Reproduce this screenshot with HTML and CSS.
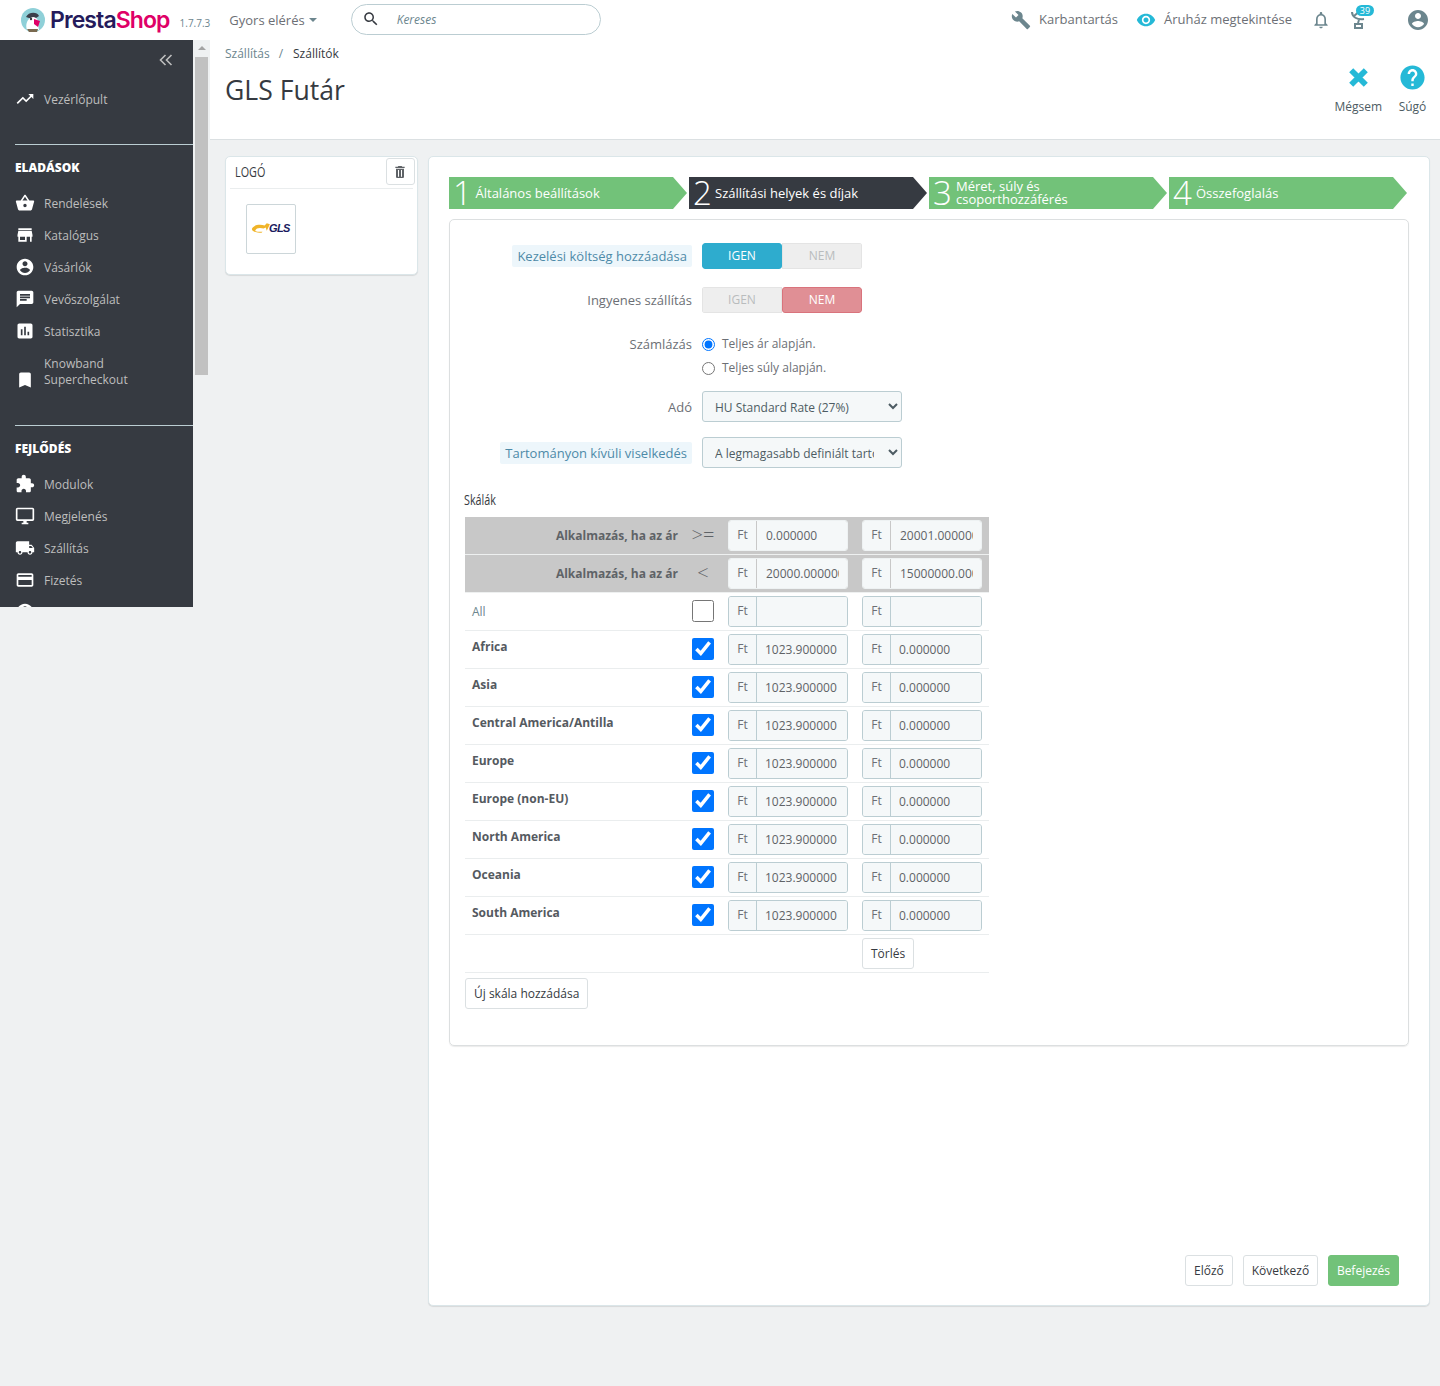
FILE: index.html
```html
<!DOCTYPE html>
<html lang="hu">
<head>
<meta charset="utf-8">
<title>GLS Futár</title>
<link rel="stylesheet" href="styles.css">
</head>
<body>
<svg class="sprite" aria-hidden="true">
<symbol id="i-trend" viewBox="0 0 24 24"><path d="M16 6l2.29 2.29-4.88 4.88-4-4L2 16.59 3.41 18l6-6 4 4 6.3-6.29L22 12V6z"/></symbol>
<symbol id="i-basket" viewBox="0 0 24 24"><path d="M17.21 9l-4.38-6.56c-.19-.28-.51-.42-.83-.42-.32 0-.64.14-.83.43L6.79 9H2c-.55 0-1 .45-1 1 0 .09.01.18.04.27l2.54 9.27c.23.84 1 1.46 1.92 1.46h13c.92 0 1.69-.62 1.93-1.46l2.54-9.27L23 10c0-.55-.45-1-1-1h-4.79zM9 9l3-4.4L15 9H9zm3 8c-1.1 0-2-.9-2-2s.9-2 2-2 2 .9 2 2-.9 2-2 2z"/></symbol>
<symbol id="i-store" viewBox="0 0 24 24"><path d="M20 4H4v2h16V4zm1 10v-2l-1-5H4l-1 5v2h1v6h10v-6h4v6h2v-6h1zm-9 4H6v-4h6v4z"/></symbol>
<symbol id="i-account" viewBox="0 0 24 24"><path d="M12 2C6.48 2 2 6.48 2 12s4.48 10 10 10 10-4.48 10-10S17.52 2 12 2zm0 3c1.66 0 3 1.34 3 3s-1.34 3-3 3-3-1.34-3-3 1.34-3 3-3zm0 14.2c-2.5 0-4.71-1.28-6-3.22.03-1.99 4-3.08 6-3.08 1.99 0 5.97 1.09 6 3.08-1.29 1.94-3.5 3.22-6 3.22z"/></symbol>
<symbol id="i-chat" viewBox="0 0 24 24"><path d="M20 2H4c-1.1 0-1.99.9-1.99 2L2 22l4-4h14c1.1 0 2-.9 2-2V4c0-1.1-.9-2-2-2zM6 9h12v2H6V9zm8 5H6v-2h8v2zm4-6H6V6h12v2z"/></symbol>
<symbol id="i-stats" viewBox="0 0 24 24"><path d="M19 3H5c-1.1 0-2 .9-2 2v14c0 1.1.9 2 2 2h14c1.1 0 2-.9 2-2V5c0-1.1-.9-2-2-2zM9 17H7v-7h2v7zm4 0h-2V7h2v10zm4 0h-2v-4h2v4z"/></symbol>
<symbol id="i-bookmark" viewBox="0 0 24 24"><path d="M17 3H7c-1.1 0-1.99.9-1.99 2L5 21l7-3 7 3V5c0-1.1-.9-2-2-2z"/></symbol>
<symbol id="i-puzzle" viewBox="0 0 24 24"><path d="M20.5 11H19V7c0-1.1-.9-2-2-2h-4V3.5C13 2.12 11.88 1 10.5 1S8 2.12 8 3.5V5H4c-1.1 0-1.99.9-1.99 2v3.8H3.5c1.49 0 2.7 1.21 2.7 2.7s-1.21 2.7-2.7 2.7H2V20c0 1.1.9 2 2 2h3.8v-1.5c0-1.49 1.21-2.7 2.7-2.7 1.49 0 2.7 1.21 2.7 2.7V22H17c1.1 0 2-.9 2-2v-4h1.5c1.38 0 2.5-1.12 2.5-2.5S21.88 11 20.5 11z"/></symbol>
<symbol id="i-desktop" viewBox="0 0 24 24"><path d="M21 2H3c-1.1 0-2 .9-2 2v12c0 1.1.9 2 2 2h7v2H8v2h8v-2h-2v-2h7c1.1 0 2-.9 2-2V4c0-1.1-.9-2-2-2zm0 14H3V4h18v12z"/></symbol>
<symbol id="i-truck" viewBox="0 0 24 24"><path d="M20 8h-3V4H3c-1.1 0-2 .9-2 2v11h2c0 1.66 1.34 3 3 3s3-1.34 3-3h6c0 1.66 1.34 3 3 3s3-1.34 3-3h2v-5l-3-4zM6 18.5c-.83 0-1.5-.67-1.5-1.5s.67-1.5 1.5-1.5 1.5.67 1.5 1.5-.67 1.5-1.5 1.5zm13.5-9l1.96 2.5H17V9.5h2.5zm-1.5 9c-.83 0-1.5-.67-1.5-1.5s.67-1.5 1.5-1.5 1.5.67 1.5 1.5-.67 1.5-1.5 1.5z"/></symbol>
<symbol id="i-card" viewBox="0 0 24 24"><path d="M20 4H4c-1.11 0-1.99.89-1.99 2L2 18c0 1.11.89 2 2 2h16c1.11 0 2-.89 2-2V6c0-1.11-.89-2-2-2zm0 14H4v-6h16v6zm0-10H4V6h16v2z"/></symbol>
<symbol id="i-wrench" viewBox="0 0 24 24"><path d="M22.7 19l-9.1-9.1c.9-2.3.4-5-1.5-6.9-2-2-5-2.4-7.4-1.3L9 6 6 9 1.6 4.7C.4 7.1.9 10.1 2.9 12.1c1.9 1.9 4.6 2.4 6.9 1.5l9.1 9.1c.4.4 1 .4 1.4 0l2.3-2.3c.5-.4.5-1.1.1-1.4z"/></symbol>
<symbol id="i-eye" viewBox="0 0 24 24"><path d="M12 4.5C7 4.5 2.73 7.61 1 12c1.73 4.39 6 7.5 11 7.5s9.27-3.11 11-7.5c-1.73-4.39-6-7.5-11-7.5zM12 17c-2.76 0-5-2.24-5-5s2.24-5 5-5 5 2.24 5 5-2.24 5-5 5zm0-8c-1.66 0-3 1.34-3 3s1.34 3 3 3 3-1.34 3-3-1.34-3-3-3z"/></symbol>
<symbol id="i-bell" viewBox="0 0 24 24"><path d="M12 22c1.1 0 2-.9 2-2h-4c0 1.1.9 2 2 2zm6-6v-5c0-3.07-1.63-5.64-4.5-6.32V4c0-.83-.67-1.5-1.5-1.5s-1.5.67-1.5 1.5v.68C7.64 5.36 6 7.92 6 11v5l-2 2v1h16v-1l-2-2zm-2 1H8v-6c0-2.48 1.51-4.5 4-4.5s4 2.02 4 4.5v6z"/></symbol>
<symbol id="i-help" viewBox="0 0 24 24"><path d="M12 2C6.48 2 2 6.48 2 12s4.48 10 10 10 10-4.48 10-10S17.52 2 12 2zm1 17h-2v-2h2v2zm2.07-7.75l-.9.92C13.45 12.9 13 13.5 13 15h-2v-.5c0-1.1.45-2.1 1.17-2.83l1.24-1.26c.37-.36.59-.86.59-1.41 0-1.1-.9-2-2-2s-2 .9-2 2H8c0-2.21 1.79-4 4-4s4 1.79 4 4c0 .88-.36 1.68-.93 2.25z"/></symbol>
<symbol id="i-trash" viewBox="0 0 24 24"><path fill-rule="evenodd" d="M6 19c0 1.1.9 2 2 2h8c1.1 0 2-.9 2-2V7H6v12zM9 9h1.500v10H9V9zm4.500 0H15v10h-1.500V9zM19 4h-3.500l-1-1h-5l-1 1H5v2h14V4z"/></symbol>
<symbol id="i-search" viewBox="0 0 24 24"><path d="M15.5 14h-.79l-.28-.27C15.41 12.59 16 11.11 16 9.5 16 5.91 13.09 3 9.5 3S3 5.91 3 9.5 5.91 16 9.5 16c1.61 0 3.09-.59 4.23-1.57l.27.28v.79l5 4.99L20.49 19l-4.99-5zm-6 0C7.01 14 5 11.99 5 9.5S7.01 5 9.5 5 14 7.01 14 9.5 11.99 14 9.500 14z"/></symbol>
</svg>

<header class="topbar">
  <svg class="logo-mark" viewBox="0 0 24 24" aria-hidden="true">
    <circle cx="12" cy="12" r="12" fill="#8fd0d8"/>
    <path d="M5 9c2-5 11-6 13-1l-3 2H8z" fill="#3b3f4a"/>
    <path d="M6 22c-2-5 0-12 6-13 4 0 6 4 5 8l1 5z" fill="#fff"/>
    <path d="M13 11l6 2-2 6-4-3z" fill="#df0067"/>
    <circle cx="10" cy="11" r="1.200" fill="#363a41"/>
    <path d="M6 21h11l-1 3H8z" fill="#7a6a50"/>
  </svg>
  <span class="logo-text"><span class="logo-presta">Presta</span><span class="logo-shop">Shop</span></span>
  <span class="version">1.7.7.3</span>
  <span class="quick">Gyors elérés<span class="caret"></span></span>
  <div class="search">
    <svg class="search-icon"><use href="#i-search"/></svg>
    <span class="search-text">Kereses</span>
  </div>
  <div class="top-right">
    <span class="top-link top-link-maint"><svg class="ic-wrench"><use href="#i-wrench"/></svg><span class="top-link-text">Karbantartás</span></span>
    <span class="top-link top-link-view"><svg class="ic-eye"><use href="#i-eye"/></svg><span class="top-link-text">Áruház megtekintése</span></span>
    <svg class="ic-bell"><use href="#i-bell"/></svg>
    <span class="cart">
      <svg class="ic-cart" viewBox="0 0 18 20"><path d="M1 3c0 5 5 8 12 7M8 11l-1 3M4 15h7v4H4zM3 7l7-6" fill="none" stroke="#6c868e" stroke-width="2"/></svg>
      <span class="badge">39</span>
    </span>
    <svg class="ic-profile"><use href="#i-account"/></svg>
  </div>
</header>

<div class="shell">
  <nav class="sidebar">
    <div class="collapse"><svg viewBox="0 0 14 12"><path d="M6.500 1L1.500 6l5 5M12.500 1l-5 5 5 5" fill="none" stroke="#bebebe" stroke-width="1.600"/></svg></div>
    <a class="nav-item nav-dash"><svg class="nav-ic"><use href="#i-trend"/></svg><span>Vezérlőpult</span></a>
    <section class="nav-section">
      <h2 class="nav-head">ELADÁSOK</h2>
      <a class="nav-item"><svg class="nav-ic"><use href="#i-basket"/></svg><span>Rendelések</span></a>
      <a class="nav-item"><svg class="nav-ic"><use href="#i-store"/></svg><span>Katalógus</span></a>
      <a class="nav-item"><svg class="nav-ic"><use href="#i-account"/></svg><span>Vásárlók</span></a>
      <a class="nav-item"><svg class="nav-ic"><use href="#i-chat"/></svg><span>Vevőszolgálat</span></a>
      <a class="nav-item"><svg class="nav-ic"><use href="#i-stats"/></svg><span>Statisztika</span></a>
      <a class="nav-item nav-item-tall"><svg class="nav-ic"><use href="#i-bookmark"/></svg><span>Knowband Supercheckout</span></a>
    </section>
    <section class="nav-section">
      <h2 class="nav-head">FEJLŐDÉS</h2>
      <a class="nav-item"><svg class="nav-ic"><use href="#i-puzzle"/></svg><span>Modulok</span></a>
      <a class="nav-item"><svg class="nav-ic"><use href="#i-desktop"/></svg><span>Megjelenés</span></a>
      <a class="nav-item"><svg class="nav-ic"><use href="#i-truck"/></svg><span>Szállítás</span></a>
      <a class="nav-item"><svg class="nav-ic"><use href="#i-card"/></svg><span>Fizetés</span></a>
      <a class="nav-item"><svg class="nav-ic"><use href="#i-account"/></svg><span></span></a>
    </section>
  </nav>

  <div class="scrollbar">
    <span class="scroll-arrow"></span>
    <span class="scroll-thumb"></span>
  </div>

  <main class="content">
    <div class="page-head">
      <div>
        <div class="crumbs"><span class="crumb-link">Szállítás</span><span class="crumb-sep">/</span><span class="crumb-cur">Szállítók</span></div>
        <h1 class="title">GLS Futár</h1>
      </div>
      <div class="head-actions">
        <div class="head-action">
          <svg class="ic-close" viewBox="0 0 24 24"><path d="M5 5l14 14M19 5L5 19" fill="none" stroke="#25b9d7" stroke-width="5.500"/></svg>
          <span>Mégsem</span>
        </div>
        <div class="head-action">
          <svg class="ic-help"><use href="#i-help"/></svg>
          <span>Súgó</span>
        </div>
      </div>
    </div>

    <div class="columns">
      <aside class="logo-panel">
        <div class="logo-panel-head">
          <span class="cond-text">LOGÓ</span>
          <button class="icon-btn"><svg><use href="#i-trash"/></svg></button>
        </div>
        <div class="thumb">
          <svg class="gls-arrow" viewBox="0 0 20 10"><path d="M1 6c2-4 8-4 12-3l2-2 3 1-3 6-1-3-2 1c-3-1-7-1-8 2 0 1 4 1 7 1l-1 1C6 10 0 9 1 6z" fill="#f0b428"/></svg>
          <span class="gls-text">GLS</span>
        </div>
      </aside>

      <section class="wizard">
        <ol class="steps">
          <li class="step"><span class="step-num">1</span><span class="step-text">Általános beállítások</span></li>
          <li class="step step-active"><span class="step-num">2</span><span class="step-text">Szállítási helyek és díjak</span></li>
          <li class="step"><span class="step-num">3</span><span class="step-text step-text-two">Méret, súly és csoporthozzáférés</span></li>
          <li class="step"><span class="step-num">4</span><span class="step-text">Összefoglalás</span></li>
        </ol>

        <div class="form-panel">
          <div class="form-row">
            <label class="form-label"><span class="help-label">Kezelési költség hozzáadása</span></label>
            <div class="toggle"><span class="toggle-opt toggle-yes-on">IGEN</span><span class="toggle-opt toggle-off">NEM</span></div>
          </div>
          <div class="form-row">
            <label class="form-label">Ingyenes szállítás</label>
            <div class="toggle"><span class="toggle-opt toggle-off">IGEN</span><span class="toggle-opt toggle-no-on">NEM</span></div>
          </div>
          <div class="form-row form-row-radios">
            <label class="form-label form-label-radio">Számlázás</label>
            <div class="radios">
              <label class="radio"><input type="radio" name="bill" checked>Teljes ár alapján.</label>
              <label class="radio"><input type="radio" name="bill">Teljes súly alapján.</label>
            </div>
          </div>
          <div class="form-row form-row-select">
            <label class="form-label">Adó</label>
            <select class="select"><option>HU Standard Rate (27%)</option></select>
          </div>
          <div class="form-row form-row-select">
            <label class="form-label"><span class="help-label">Tartományon kívüli viselkedés</span></label>
            <select class="select"><option>A legmagasabb definiált tartomány alkalmazása</option></select>
          </div>

          <div class="ranges-title cond-text">Skálák</div>

          <div class="ranges">
            <div class="r-row r-row-head">
              <div class="r-head-label">Alkalmazás, ha az ár</div>
              <div class="r-op">&gt;=</div>
              <div class="r-cell"><div class="group group-head"><span class="addon">Ft</span><input class="g-input" value="0.000000"></div></div>
              <div class="r-cell"><div class="group group-head"><span class="addon">Ft</span><input class="g-input" value="20001.000000"></div></div>
            </div>
            <div class="r-row r-row-head">
              <div class="r-head-label">Alkalmazás, ha az ár</div>
              <div class="r-op">&lt;</div>
              <div class="r-cell"><div class="group group-head"><span class="addon">Ft</span><input class="g-input" value="20000.000000"></div></div>
              <div class="r-cell"><div class="group group-head"><span class="addon">Ft</span><input class="g-input" value="15000000.000000"></div></div>
            </div>
            <div class="r-row">
              <div class="r-all">All</div>
              <div class="r-check"><input type="checkbox" class="check"></div>
              <div class="r-cell"><div class="group"><span class="addon">Ft</span><input class="g-input"></div></div>
              <div class="r-cell"><div class="group"><span class="addon">Ft</span><input class="g-input"></div></div>
            </div>
            <div class="r-row">
              <div class="r-zone">Africa</div>
              <div class="r-check"><input type="checkbox" class="check" checked></div>
              <div class="r-cell"><div class="group"><span class="addon">Ft</span><input class="g-input" value="1023.900000"></div></div>
              <div class="r-cell"><div class="group"><span class="addon">Ft</span><input class="g-input" value="0.000000"></div></div>
            </div>
            <div class="r-row">
              <div class="r-zone">Asia</div>
              <div class="r-check"><input type="checkbox" class="check" checked></div>
              <div class="r-cell"><div class="group"><span class="addon">Ft</span><input class="g-input" value="1023.900000"></div></div>
              <div class="r-cell"><div class="group"><span class="addon">Ft</span><input class="g-input" value="0.000000"></div></div>
            </div>
            <div class="r-row">
              <div class="r-zone">Central America/Antilla</div>
              <div class="r-check"><input type="checkbox" class="check" checked></div>
              <div class="r-cell"><div class="group"><span class="addon">Ft</span><input class="g-input" value="1023.900000"></div></div>
              <div class="r-cell"><div class="group"><span class="addon">Ft</span><input class="g-input" value="0.000000"></div></div>
            </div>
            <div class="r-row">
              <div class="r-zone">Europe</div>
              <div class="r-check"><input type="checkbox" class="check" checked></div>
              <div class="r-cell"><div class="group"><span class="addon">Ft</span><input class="g-input" value="1023.900000"></div></div>
              <div class="r-cell"><div class="group"><span class="addon">Ft</span><input class="g-input" value="0.000000"></div></div>
            </div>
            <div class="r-row">
              <div class="r-zone">Europe (non-EU)</div>
              <div class="r-check"><input type="checkbox" class="check" checked></div>
              <div class="r-cell"><div class="group"><span class="addon">Ft</span><input class="g-input" value="1023.900000"></div></div>
              <div class="r-cell"><div class="group"><span class="addon">Ft</span><input class="g-input" value="0.000000"></div></div>
            </div>
            <div class="r-row">
              <div class="r-zone">North America</div>
              <div class="r-check"><input type="checkbox" class="check" checked></div>
              <div class="r-cell"><div class="group"><span class="addon">Ft</span><input class="g-input" value="1023.900000"></div></div>
              <div class="r-cell"><div class="group"><span class="addon">Ft</span><input class="g-input" value="0.000000"></div></div>
            </div>
            <div class="r-row">
              <div class="r-zone">Oceania</div>
              <div class="r-check"><input type="checkbox" class="check" checked></div>
              <div class="r-cell"><div class="group"><span class="addon">Ft</span><input class="g-input" value="1023.900000"></div></div>
              <div class="r-cell"><div class="group"><span class="addon">Ft</span><input class="g-input" value="0.000000"></div></div>
            </div>
            <div class="r-row">
              <div class="r-zone">South America</div>
              <div class="r-check"><input type="checkbox" class="check" checked></div>
              <div class="r-cell"><div class="group"><span class="addon">Ft</span><input class="g-input" value="1023.900000"></div></div>
              <div class="r-cell"><div class="group"><span class="addon">Ft</span><input class="g-input" value="0.000000"></div></div>
            </div>
            <div class="r-row">
              <div></div>
              <div></div>
              <div></div>
              <div class="r-cell"><button class="btn">Törlés</button></div>
            </div>
          </div>
          <button class="btn btn-add">Új skála hozzádása</button>
        </div>

        <div class="wizard-actions">
          <button class="btn btn-prev">Előző</button>
          <button class="btn btn-next">Következő</button>
          <button class="btn btn-finish">Befejezés</button>
        </div>
      </section>
    </div>
  </main>
</div>
</body>
</html>
```

FILE: styles.css
```css
* { box-sizing: border-box; }
html, body { margin: 0; padding: 0; }
body {
  width: 1440px;
  height: 1386px;
  overflow: hidden;
  background: #eff1f2;
  font-family: "Open Sans", "Liberation Sans", sans-serif;
  font-size: 13px;
  color: #363a41;
}
.sprite { width: 0; height: 0; position: absolute; }

/* top bar */
.topbar {
  height: 40px;
  background: #fff;
  display: flex;
  align-items: center;
  padding-left: 21px;
}
.logo-mark { width: 24px; height: 24px; flex: none; }
.logo-text { margin-left: 5px; font-family: "Inter", sans-serif; font-size: 23px; font-weight: 600; letter-spacing: -0.9px; line-height: 40px; }
.logo-presta { color: #251b5b; }
.logo-shop { color: #df0067; }
.version { margin-left: 10px; font-size: 10px; color: #6c868e; margin-top: 5px; }
.quick { margin-left: 19px; font-size: 13px; color: #6c6f75; display: flex; align-items: center; }
.caret { margin-left: 4px; width: 0; height: 0; border: 4.5px solid transparent; border-top-color: #6c868e; border-bottom: 0; }
.search {
  margin-left: 34px;
  margin-bottom: 2px;
  width: 250px;
  height: 31px;
  border: 1px solid #bbcdd2;
  border-radius: 16px;
  display: flex;
  align-items: center;
  padding-left: 10px;
}
.search-icon { width: 18px; height: 18px; fill: #363a41; }
.search-text { margin-left: 17px; font-size: 12px; font-style: italic; color: #6c868e; }
.top-right { margin-left: auto; display: flex; align-items: center; padding-right: 14px; padding-bottom: 1px; }
.top-link { display: flex; align-items: center; color: #6c6f75; font-size: 13px; }
.top-link-text { margin-top: -1px; }
.ic-wrench { width: 20px; height: 20px; fill: #6c868e; margin-right: 8px; }
.ic-eye { width: 20px; height: 20px; fill: #25b9d7; margin-right: 8px; }
.top-link-view { margin-left: 18px; }
.ic-bell { width: 20px; height: 20px; fill: #6c868e; margin-left: 19px; }
.cart { position: relative; width: 18px; height: 22px; margin-left: 20px; }
.ic-cart { width: 18px; height: 20px; position: absolute; left: 0; top: 0; }
.badge {
  position: absolute;
  left: 5px;
  top: -4px;
  width: 18px;
  height: 11px;
  border-radius: 6px;
  background: #25b9d7;
  color: #fff;
  font-size: 9px;
  line-height: 11px;
  text-align: center;
}
.ic-profile { width: 24px; height: 24px; fill: #6c868e; margin-left: 37px; margin-right: -4px; }

/* shell */
.shell { display: flex; align-items: flex-start; }

/* sidebar */
.sidebar {
  width: 193px;
  height: 567px;
  flex: none;
  overflow: hidden;
  background: #363a41;
  color: #bebebe;
}
.collapse { height: 43px; display: flex; justify-content: flex-end; align-items: center; padding: 0 20px 4px 0; }
.collapse svg { width: 14px; height: 12px; }
.nav-item {
  display: flex;
  align-items: center;
  height: 32px;
  padding-left: 15px;
  font-size: 12px;
  line-height: 16px;
}
.nav-item span { padding-top: 1px; }
.nav-ic { width: 20px; height: 20px; fill: #fff; flex: none; margin-right: 9px; }
.nav-item-tall { height: 50px; }
.nav-item-tall .nav-ic { margin-top: 16px; }
.nav-item-tall span { width: 100px; padding-top: 0; }
.nav-dash { margin-bottom: 29px; }
.nav-section { border-top: 1px solid #bbcdd2; margin-left: 15px; margin-bottom: 28px; }
.nav-section .nav-item { margin-left: -15px; }
.nav-head {
  margin: 0;
  height: 42px;
  padding-top: 3px;
  display: flex;
  align-items: center;
  font-size: 12px;
  font-weight: 800;
  color: #fff;
}

/* fake scrollbar */
.scrollbar { width: 17px; flex: none; padding: 0 2px; display: flex; flex-direction: column; align-items: stretch; }
.scroll-arrow { height: 17px; position: relative; }
.scroll-arrow::after {
  content: "";
  position: absolute;
  left: 3px;
  top: 6px;
  border: 4px solid transparent;
  border-top: 0;
  border-bottom: 4px solid #a3a3a3;
}
.scroll-thumb { height: 318px; background: #c1c1c1; }

/* content */
.content { flex: 1; min-width: 0; }
.page-head {
  height: 100px;
  background: #fff;
  border-bottom: 1px solid #dbe0e2;
  display: flex;
  justify-content: space-between;
  padding: 6px 13px 0 15px;
}
.crumbs { font-size: 12px; line-height: 16px; }
.crumb-link { color: #6c868e; }
.crumb-sep { color: #6c868e; margin: 0 10px 0 9px; }
.crumb-cur { color: #363a41; }
.title { margin: 11px 0 0; font-size: 26.600px; font-weight: 400; line-height: 34px; color: #363a41; }
.head-actions { display: flex; gap: 16px; padding-top: 18px; }
.head-action { display: flex; flex-direction: column; align-items: center; font-size: 12px; color: #4d5c63; line-height: 16px; }
.ic-close { width: 25px; height: 25px; margin-top: 1px; margin-bottom: 9px; }
.ic-help { width: 29px; height: 29px; fill: #25b9d7; margin-top: -1px; margin-bottom: 7px; }

.columns { display: flex; align-items: flex-start; gap: 10px; padding: 16px 10px 0 15px; }

/* logo panel */
.logo-panel {
  width: 193px;
  height: 119px;
  flex: none;
  background: #fff;
  border: 1px solid #dbe6e9;
  border-radius: 5px;
  box-shadow: 0 1px 1px rgba(0,0,0,.1);
  padding: 2px 2px 0 4px;
}
.logo-panel-head {
  height: 30px;
  border-bottom: 1px solid #eaedee;
  display: flex;
  justify-content: space-between;
  align-items: center;
  margin-right: 2px;
  padding-left: 5px;
}
.cond-text { font-size: 15px; color: #363a41; transform: scaleX(.72); transform-origin: left center; display: inline-block; }
.logo-panel-head .cond-text { margin-top: -5px; }
.icon-btn {
  width: 29px;
  height: 27px;
  margin: -4px -2px 0 0;
  padding: 0;
  background: #fff;
  border: 1px solid #dbe0e2;
  border-radius: 3px;
  display: flex;
  align-items: center;
  justify-content: center;
}
.icon-btn svg { width: 16px; height: 16px; fill: #5f6367; margin-right: 2px; }
.thumb {
  width: 50px;
  height: 50px;
  margin: 15px 0 0 16px;
  background: #fff;
  border: 1px solid #ccd6d9;
  border-radius: 2px;
  display: flex;
  align-items: center;
  padding: 0 0 3px 4px;
}
.gls-arrow { width: 21px; height: 11px; flex: none; }
.gls-text { font-family: "Liberation Sans", sans-serif; font-size: 11px; font-weight: 700; font-style: italic; color: #1a1a5e; letter-spacing: -0.6px; margin-left: -3px; }

/* wizard */
.wizard {
  flex: 1;
  min-width: 0;
  height: 1150px;
  background: #fff;
  border: 1px solid #dbe6e9;
  border-radius: 5px;
  box-shadow: 0 1px 1px rgba(0,0,0,.1);
  padding: 20px 20px 19px;
  display: flex;
  flex-direction: column;
}
.steps { list-style: none; margin: 0; padding: 0; display: flex; gap: 2px; }
.step {
  width: 238px;
  height: 32px;
  background: #72c279;
  color: #fff;
  display: flex;
  align-items: center;
  padding-left: 4px;
  clip-path: polygon(0 0, 224px 0, 100% 50%, 224px 100%, 0 100%);
}
.step-active { background: #363a41; }
.step-num { font-size: 33px; font-weight: 360; line-height: 32px; width: 23px; flex: none; }
.step-text { font-size: 13px; line-height: 13px; margin-left: -1px; }
.step:first-child .step-text { margin-left: -0.5px; }
.step-text-two { width: 130px; font-size: 13px; line-height: 13px; margin-left: 0; }
.step:last-child .step-text { margin-left: 0; }

/* form */
.form-panel {
  margin-top: 10px;
  height: 827px;
  border: 1px solid #dcdfe0;
  border-radius: 5px;
  box-shadow: 0 1px 1px rgba(0,0,0,.08);
  padding-top: 23px;
}
.form-row { display: flex; align-items: center; gap: 10px; margin-bottom: 18px; }
.form-row-radios { align-items: flex-start; margin-bottom: 11px; }
.form-row-select { margin-bottom: 15px; }
.form-label { width: 242px; flex: none; text-align: right; color: #6c6f75; font-size: 13px; line-height: 18px; }
.form-label-radio { padding-top: 4px; }
.help-label { background: #edf6fb; color: #4d8aa8; border-radius: 2px; padding: 2px 5px; }
.toggle { display: flex; width: 160px; height: 26px; border-radius: 3px; overflow: hidden; }
.toggle-opt { width: 80px; height: 26px; text-align: center; line-height: 24px; font-size: 12px; border: 1px solid transparent; }
.toggle-yes-on { background: #2eacce; color: #fff; border-color: #2eacce; border-radius: 3px; }
.toggle-no-on { background: #e08f95; color: #fff; border-color: #d9737c; border-radius: 3px; }
.toggle-off { background: #eeeeee; color: #b9bcbd; border-color: #e4e4e4; }
.radios { display: flex; flex-direction: column; padding-top: 1px; }
.radio { display: flex; align-items: center; height: 24px; padding-bottom: 2px; font-size: 12px; color: #6c6f75; }
.radio input { width: 13px; height: 13px; margin: 2px 7px 0 0; }
.select {
  width: 200px;
  height: 31px;
  background: #f5f8f9;
  border: 1px solid #bbcdd2;
  border-radius: 3px;
  padding: 2px 11px 0 8px;
  font: 12px "Open Sans", sans-serif;
  color: #4d5c63;
}
.ranges-title { display: block; margin: 21px 0 8px 14px; line-height: 20px; font-size: 15px; }

/* ranges */
.ranges { margin-left: 15px; width: 524px; }
.r-row {
  display: grid;
  grid-template-columns: 220px 36px 134px 134px;
  height: 38px;
  border-bottom: 1px solid #eaedee;
}
.r-row-head { background: #c8c8c8; border-bottom-color: #eef0f0; }
.r-head-label { text-align: right; font-size: 12px; font-weight: 700; color: #5f6367; line-height: 37px; padding-right: 7px; }
.r-op { font-size: 20px; color: #5f6367; text-align: center; line-height: 35px; font-weight: 300; }
.r-all { font-size: 12px; color: #6c868e; padding-left: 7px; line-height: 37px; }
.r-zone { font-size: 12px; font-weight: 700; color: #555a5f; padding-left: 7px; line-height: 31px; }
.r-check { display: flex; justify-content: center; align-items: center; padding-bottom: 1px; }
.check { width: 22px; height: 22px; margin: 0; }
.r-cell { padding: 3px 7px 0; }
.group {
  display: flex;
  width: 120px;
  height: 31px;
  border: 1px solid #bbcdd2;
  border-radius: 3px;
  background: #f5f8f9;
  overflow: hidden;
}
.group-head { border-color: #eef2f3; background: transparent; gap: 1px; }
.addon {
  width: 28px;
  flex: none;
  border-right: 1px solid #bbcdd2;
  text-align: center;
  line-height: 28px;
  font-size: 12px;
  color: #6c6f75;
  background: #f5f8f9;
}
.group-head .addon { border-right: 0; width: 27px; }
.g-input {
  flex: 1;
  min-width: 0;
  border: 0;
  background: #f5f8f9;
  padding: 0 8px;
  font: 12px "Open Sans", sans-serif;
  color: #5f6367;
  outline: 0;
}
.group-head .g-input { padding-left: 9px; }
.btn {
  height: 31px;
  padding: 0 8px;
  background: #fff;
  border: 1px solid #dbe0e2;
  border-radius: 3px;
  font: 12px "Open Sans", sans-serif;
  color: #363a41;
}
.btn-add { margin: 5px 0 0 15px; }
.wizard-actions { margin-top: auto; padding-right: 10px; display: flex; justify-content: flex-end; gap: 10px; }
.btn-prev { width: 48px; padding: 0; }
.btn-next { width: 75px; padding: 0; }
.btn-finish { background: #72c279; border-color: #72c279; color: #fff; }
```
